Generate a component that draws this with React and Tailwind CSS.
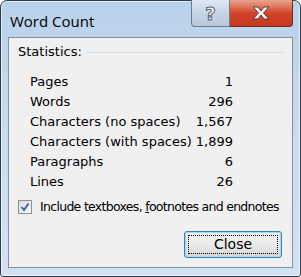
import React from 'react';

const stats = [
  ['Pages', '1'],
  ['Words', '296'],
  ['Characters (no spaces)', '1,567'],
  ['Characters (with spaces)', '1,899'],
  ['Paragraphs', '6'],
  ['Lines', '26'],
];

const uiFont = { fontFamily: 'Tahoma, "DejaVu Sans", sans-serif' };

export default function App() {
  return (
    <div className="w-[301px] h-[277px] bg-white">
      <div className="w-[301px] h-[277px] flex flex-col rounded-t-[7px] rounded-b-[3px] border border-[#2e3b4b] bg-gradient-to-b from-[#b9d1ea] via-[#c9dcf0] to-[#d2e2f3] shadow-[inset_0_0_0_1px_rgba(255,255,255,0.6)]">
        {/* title bar */}
        <div className="h-[36px] flex items-start">
          <div className="pl-[9px] pt-[9px] text-[15px] text-black" style={{ fontFamily: '"Open Sans", "Noto Sans", sans-serif' }}>
            Word Count
          </div>
          <div className="ml-auto mr-[7px] flex -mt-px">
            <div className="w-[39px] h-[27px] flex items-center justify-center rounded-bl-[4px] border border-t-0 border-[#6d7d90] bg-gradient-to-b from-[#dfe8f2] via-[#c6d4e4] to-[#b7c8dc] text-[#f5f7fa] text-[18px] font-bold" style={{ fontFamily: '"DejaVu Sans", sans-serif', WebkitTextStroke: '1px #5a6675' }}>
              ?
            </div>
            <div className="w-[63px] h-[27px] flex items-center justify-center rounded-br-[4px] border border-l-0 border-t-0 border-[#6b2a20] bg-gradient-to-b from-[#e9a48f] via-[#d2432a] to-[#c7391f]">
              <svg width="22" height="16" viewBox="0 0 22 16">
                <path d="M3 2 L8 2 L11 6 L14 2 L19 2 L13.5 8 L19 14 L14 14 L11 10 L8 14 L3 14 L8.5 8 Z" fill="#f3f3f3" stroke="#5a3a33" strokeWidth="1" strokeLinejoin="round" />
              </svg>
            </div>
          </div>
        </div>
        {/* client area */}
        <div className="mx-[7px] h-[231px] border border-[#8291a3] bg-[#f0f0f0] flex flex-col text-[13px] text-black" style={uiFont}>
          <div className="flex items-center pl-[9px] pr-[8px] pt-[4px] h-[24px]">
            <span>Statistics:</span>
            <div className="flex-1 ml-[5px] h-px bg-[#d5dfe5]" />
          </div>
          <div className="flex flex-col pt-[10px] pl-[21px] w-[224px]">
            {stats.map(([label, value]) => (
              <div key={label} className="h-[20px] flex items-center justify-between">
                <span>{label}</span>
                <span>{value}</span>
              </div>
            ))}
          </div>
          <div className="flex items-center pl-[9px] mt-[5px] h-[20px]">
            <div className="w-[14px] h-[14px] shrink-0 border border-[#8e8f8f] bg-gradient-to-br from-[#dcdcdc] to-[#f8f8f8] flex items-center justify-center">
              <svg width="10" height="10" viewBox="0 0 10 10">
                <path d="M1.5 5 L4 8 L8.5 1.5" fill="none" stroke="#3c5aa8" strokeWidth="1.8" />
              </svg>
            </div>
            <span className="ml-[8px] whitespace-nowrap text-[12.5px] tracking-[-0.7px]">
              Include textboxes, <span className="underline">f</span>ootnotes and endnotes
            </span>
          </div>
          <div className="flex justify-end pr-[10px] mt-[14px]">
            <div className="w-[98px] h-[27px] rounded-[3px] border border-[#3c7fb1] shadow-[0_0_0_1px_#a6d8f8_inset] bg-gradient-to-b from-[#f2f2f2] via-[#ebebeb] to-[#d5d5d5] p-[3px]">
              <div className="w-full h-full border border-dotted border-black flex items-center justify-center text-[14px]">
                Close
              </div>
            </div>
          </div>
        </div>
      </div>
    </div>
  );
}
